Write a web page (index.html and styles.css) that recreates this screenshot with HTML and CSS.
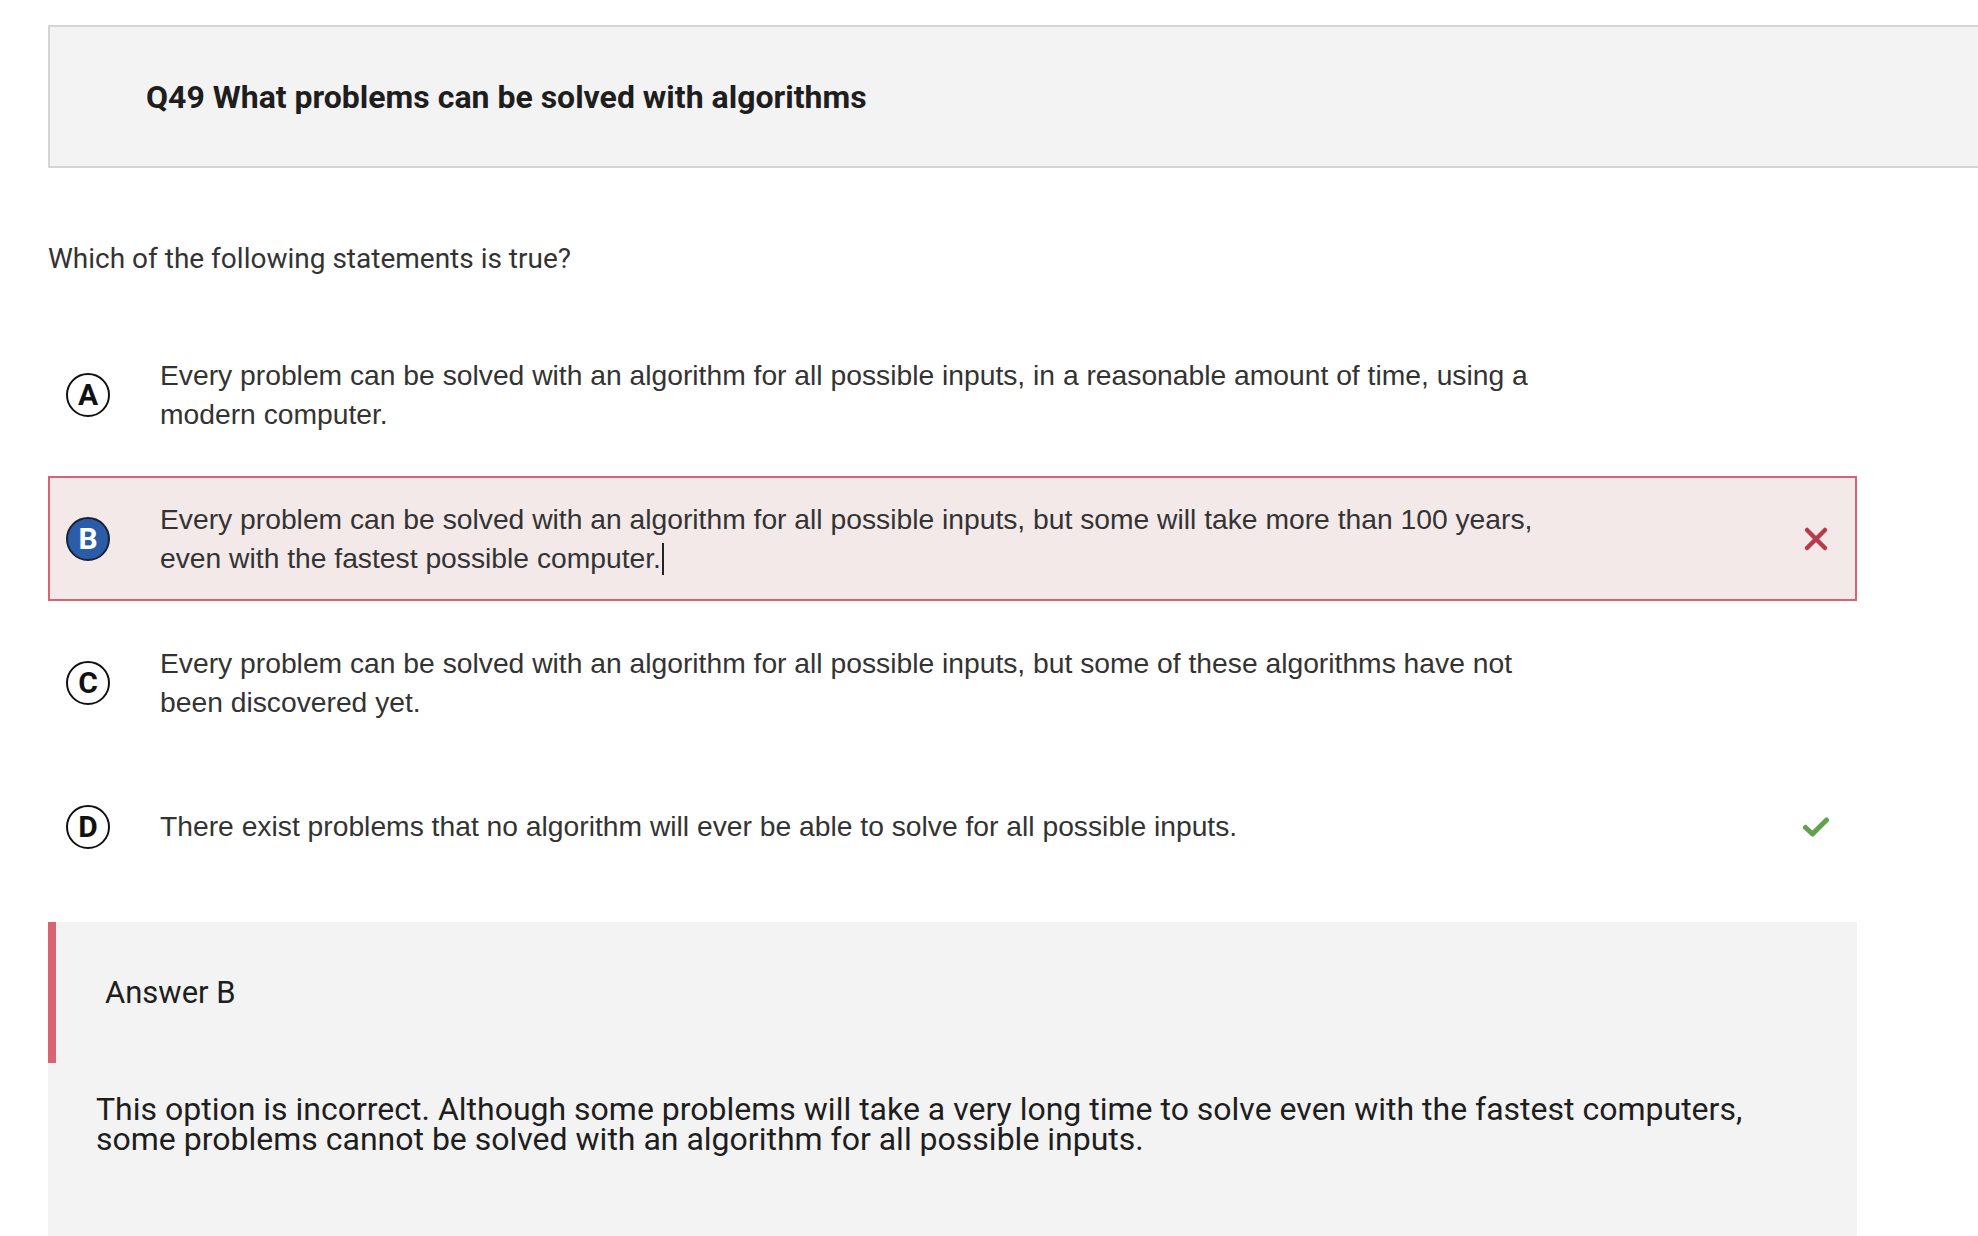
FILE: index.html
```html
<!DOCTYPE html>
<html>
<head>
<meta charset="utf-8">
<link rel="stylesheet" href="styles.css">
</head>
<body>
<div class="page">
  <div class="title-box">
    <h1 class="title">Q49 What problems can be solved with algorithms</h1>
  </div>
  <p class="question">Which of the following statements is true?</p>
  <div class="options">
    <div class="option">
      <span class="badge">A</span>
      <span class="opt-text">Every problem can be solved with an algorithm for all possible inputs, in a reasonable amount of time, using a modern computer.</span>
      <span class="mark"></span>
    </div>
    <div class="option wrong">
      <span class="badge selected">B</span>
      <span class="opt-text">Every problem can be solved with an algorithm for all possible inputs, but some will take more than 100 years, even with the fastest possible computer.<span class="caret"></span></span>
      <span class="mark">
        <svg width="26" height="26" viewBox="0 0 26 26"><path d="M4 4 L22 22 M22 4 L4 22" stroke="#b93b4b" stroke-width="4.5" stroke-linecap="round"/></svg>
      </span>
    </div>
    <div class="option">
      <span class="badge">C</span>
      <span class="opt-text">Every problem can be solved with an algorithm for all possible inputs, but some of these algorithms have not been discovered yet.</span>
      <span class="mark"></span>
    </div>
    <div class="option">
      <span class="badge">D</span>
      <span class="opt-text">There exist problems that no algorithm will ever be able to solve for all possible inputs.</span>
      <span class="mark">
        <svg width="28" height="24" viewBox="0 0 28 24"><path d="M3.5 12.5 L10.5 19 L24.5 5" fill="none" stroke="#62a24f" stroke-width="5" stroke-linecap="round" stroke-linejoin="round"/></svg>
      </span>
    </div>
  </div>
  <div class="answer">
    <div class="answer-head">Answer B</div>
    <p class="answer-body">This option is incorrect. Although some problems will take a very long time to solve even with the fastest computers, some problems cannot be solved with an algorithm for all possible inputs.</p>
  </div>
</div>
</body>
</html>
```
FILE: styles.css
```css
html, body {
  margin: 0;
  padding: 0;
  background: #ffffff;
  overflow: hidden;
}
.page {
  padding: 25px 0 0 48px;
  font-family: Roboto, "Liberation Sans", sans-serif;
}
.title-box {
  height: 139px;
  background: #f3f3f3;
  border: 2px solid #d5d5d9;
  border-right: none;
  display: flex;
  align-items: center;
  padding-left: 96px;
}
.title {
  margin: 0;
  font-family: Roboto, sans-serif;
  font-weight: 700;
  font-size: 32px;
  color: #1e1e1e;
}
.question {
  margin: 76px 0 0 0;
  font-family: Roboto, sans-serif;
  font-size: 28px;
  line-height: 30px;
  color: #333;
}
.options {
  margin-top: 58px;
  width: 1809px;
  display: flex;
  flex-direction: column;
  gap: 19px;
}
.option {
  min-height: 121px;
  border: 2px solid transparent;
  display: flex;
  align-items: center;
  padding-left: 16px;
}
.option.wrong {
  background: #f3e9e9;
  border-color: #d9636e;
}
.badge {
  flex: none;
  width: 40px;
  height: 40px;
  border: 2px solid #111;
  border-radius: 50%;
  display: flex;
  align-items: center;
  justify-content: center;
  font-family: Roboto, sans-serif;
  font-weight: 700;
  font-size: 30px;
  line-height: 1;
  color: #111;
}
.badge.selected {
  background: #2a5caa;
  color: #fff;
  border-color: #1b2230;
}
.opt-text {
  margin-left: 50px;
  width: 1400px;
  font-family: "Liberation Sans", Arial, sans-serif;
  font-size: 28.25px;
  line-height: 39px;
  color: #333;
}
.caret {
  display: inline-block;
  width: 2px;
  height: 32px;
  background: #222;
  vertical-align: -7px;
  margin-left: 1px;
}
.mark {
  margin-left: auto;
  margin-right: 25px;
  width: 28px;
  display: flex;
  justify-content: center;
  align-items: center;
}
.answer {
  margin-top: 33px;
  width: 1809px;
  background: #f3f3f3;
  height: 400px;
}
.answer-head {
  height: 141px;
  border-left: 8px solid #d9636e;
  display: flex;
  align-items: center;
  padding-left: 49px;
  font-family: Roboto, sans-serif;
  font-size: 31px;
  color: #1e1e1e;
}
.answer-body {
  margin: 0;
  padding: 31px 81px 0 48px;
  font-family: Roboto, sans-serif;
  font-size: 32px;
  line-height: 30px;
  color: #1e1e1e;
}
```
